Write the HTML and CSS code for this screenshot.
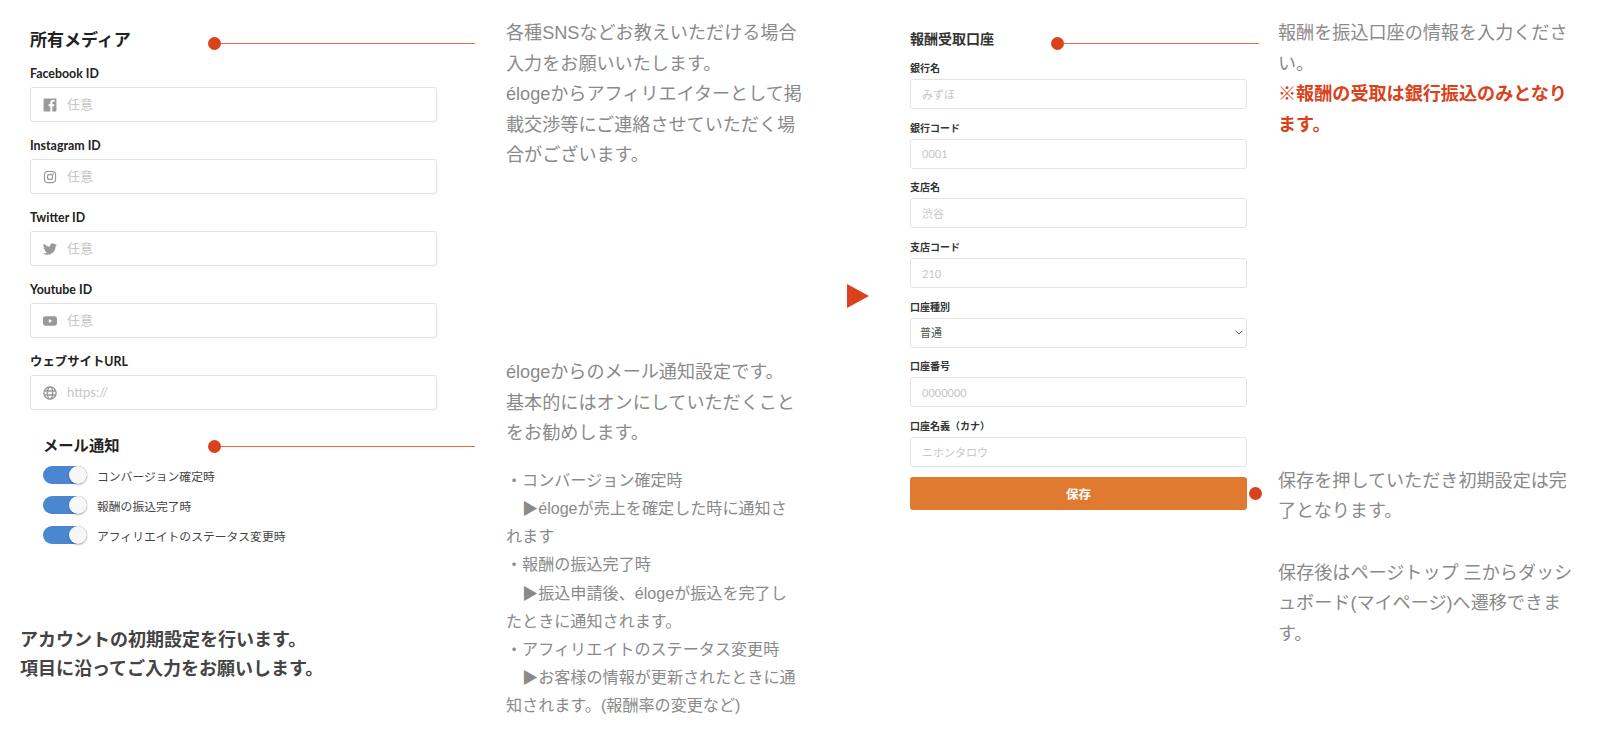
FILE: index.html
```html
<!DOCTYPE html>
<html lang="ja">
<head>
  <meta charset="UTF-8" />
  <title>初期設定</title>
  <link rel="stylesheet" href="styles.css">
</head>
<body>

  <!-- 左: 所有メディア / メール通知 -->
  <section class="col col-media">
    <div class="head">
      <h2>所有メディア</h2>
      <div class="connector"><i class="dot"></i><i class="line"></i></div>
    </div>

    <div class="field">
      <label>Facebook ID</label>
      <div class="icon-input">
        <svg viewBox="0 0 24 24"><path d="M2 1h20a1 1 0 0 1 1 1v20a1 1 0 0 1-1 1h-6v-9h3l.5-3.5H16V8.2c0-1 .4-1.7 1.8-1.7H20V3.3c-.5-.1-1.6-.2-2.900-.2-2.800 0-4.600 1.700-4.600 4.700v2.700h-3V14h3v9H2a1 1 0 0 1-1-1V2a1 1 0 0 1 1-1z"/></svg>
        <input type="text" placeholder="任意">
      </div>
    </div>
    <div class="field">
      <label>Instagram ID</label>
      <div class="icon-input">
        <svg viewBox="0 0 24 24" class="outline"><rect x="2.500" y="2.500" width="19" height="19" rx="5.500"/><circle cx="12" cy="12" r="4.500"/><circle cx="17.500" cy="6.500" r=".5"/></svg>
        <input type="text" placeholder="任意">
      </div>
    </div>
    <div class="field">
      <label>Twitter ID</label>
      <div class="icon-input">
        <svg viewBox="0 0 24 24"><path d="M23.950 4.570a10 10 0 0 1-2.820.77 4.960 4.960 0 0 0 2.160-2.720c-.95.55-2 .96-3.130 1.190a4.920 4.920 0 0 0-8.380 4.480A13.980 13.980 0 0 1 1.640 3.160a4.930 4.930 0 0 0 1.520 6.570 4.900 4.900 0 0 1-2.230-.61v.06a4.920 4.920 0 0 0 3.950 4.830 4.900 4.900 0 0 1-2.220.08 4.930 4.930 0 0 0 4.600 3.420A9.870 9.870 0 0 1 0 19.540a13.940 13.940 0 0 0 7.550 2.210c9.050 0 14-7.500 14-13.980 0-.21 0-.42-.01-.63a10 10 0 0 0 2.410-2.570z"/></svg>
        <input type="text" placeholder="任意">
      </div>
    </div>
    <div class="field">
      <label>Youtube ID</label>
      <div class="icon-input">
        <svg viewBox="0 0 24 24"><path fill-rule="evenodd" d="M4 4h16a4 4 0 0 1 4 4v8a4 4 0 0 1-4 4H4a4 4 0 0 1-4-4V8a4 4 0 0 1 4-4zm6 4.500v7l6-3.500z"/></svg>
        <input type="text" placeholder="任意">
      </div>
    </div>
    <div class="field">
      <label>ウェブサイトURL</label>
      <div class="icon-input">
        <svg viewBox="0 0 24 24" class="outline thick"><circle cx="12" cy="12" r="10.500"/><ellipse cx="12" cy="12" rx="4.500" ry="10.500"/><path d="M2 8.500h20M2 15.500h20"/></svg>
        <input type="text" placeholder="https://">
      </div>
    </div>

    <div class="head head-mail">
      <h2>メール通知</h2>
      <div class="connector"><i class="dot"></i><i class="line"></i></div>
    </div>
    <ul class="toggles">
      <li><span class="toggle"></span>コンバージョン確定時</li>
      <li><span class="toggle"></span>報酬の振込完了時</li>
      <li><span class="toggle"></span>アフィリエイトのステータス変更時</li>
    </ul>

    <p class="lead">アカウントの初期設定を行います。<br>項目に沿ってご入力をお願いします。</p>
  </section>

  <!-- 説明文 -->
  <section class="col col-note">
    <p class="note">各種SNSなどお教えいただける場合<br>入力をお願いいたします。<br>élogeからアフィリエイターとして掲<br>載交渉等にご連絡させていただく場<br>合がございます。</p>
    <p class="note note-mail">élogeからのメール通知設定です。<br>基本的にはオンにしていただくこと<br>をお勧めします。</p>
    <p class="note-list">・コンバージョン確定時<br>　▶élogeが売上を確定した時に通知さ<br>れます<br>・報酬の振込完了時<br>　▶振込申請後、élogeが振込を完了し<br>たときに通知されます。<br>・アフィリエイトのステータス変更時<br>　▶お客様の情報が更新されたときに通<br>知されます。(報酬率の変更など)</p>
  </section>

  <div class="col-arrow"><div class="arrow"></div></div>

  <!-- 報酬受取口座 -->
  <section class="col col-bank">
    <div class="head">
      <h3>報酬受取口座</h3>
      <div class="connector"><i class="dot"></i><i class="line"></i></div>
    </div>
    <div class="bank-field"><label>銀行名</label><input type="text" placeholder="みずほ"></div>
    <div class="bank-field"><label>銀行コード</label><input type="text" placeholder="0001"></div>
    <div class="bank-field"><label>支店名</label><input type="text" placeholder="渋谷"></div>
    <div class="bank-field"><label>支店コード</label><input type="text" placeholder="210"></div>
    <div class="bank-field">
      <label>口座種別</label>
      <div class="select-wrap">
        <select><option>普通</option><option>当座</option></select>
        <svg viewBox="0 0 8 5"><path d="M.7.8 4 4l3.300-3.200"/></svg>
      </div>
    </div>
    <div class="bank-field"><label>口座番号</label><input type="text" placeholder="0000000"></div>
    <div class="bank-field"><label>口座名義（カナ）</label><input type="text" placeholder="ニホンタロウ"></div>
    <div class="submit">
      <button>保存</button>
      <i class="dot"></i>
    </div>
  </section>

  <section class="col col-note-right">
    <p class="note">報酬を振込口座の情報を入力くださ<br>い。<br><strong>※報酬の受取は銀行振込のみとなり<br>ます。</strong></p>
    <p class="note note-save">保存を押していただき初期設定は完<br>了となります。<br><br>保存後はページトップ 三からダッシ<br>ュボード(マイページ)へ遷移できま<br>す。</p>
  </section>

</body>
</html>
```

FILE: styles.css
```css
* {
  box-sizing: border-box;
}
html, body {
  margin: 0;
  padding: 0;
  height: 100%;
  background-color: #fff;
  color: #333;
  font-family: "Liberation Sans", "Noto Sans CJK JP", sans-serif;
  overflow: hidden;
}
body {
  display: flex;
  align-items: flex-start;
}
h2, h3, p, ul {
  margin: 0;
  padding: 0;
}
i {
  display: block;
}

/* columns */
.col-media {
  width: 506px;
  flex: none;
  padding: 28px 0 0 20px;
  font-family: Lato, "Noto Sans CJK JP", sans-serif;
}
.col-note {
  width: 341px;
  flex: none;
  padding-top: 18px;
}
.col-arrow {
  width: 63px;
  flex: none;
  padding-top: 284px;
}
.col-bank {
  width: 368px;
  flex: none;
  padding-top: 29px;
  font-family: Lato, "Noto Sans CJK JP", sans-serif;
}
.col-note-right {
  width: 322px;
  flex: none;
  padding-top: 18px;
}

/* heading with connector */
.head {
  display: flex;
  align-items: flex-start;
}
.col-media .head {
  width: 445px;
  margin: 0 0 13px 10px;
}
.col-media h2 {
  width: 178px;
  font-size: 17px;
  line-height: 24px;
  color: #222;
}
.col-media .head .connector {
  margin-top: 9px;
}
.col-media .head-mail {
  width: 432px;
  margin: 23px 0 9px 23px;
}
.col-media .head-mail h2 {
  width: 165px;
  font-size: 15.3px;
}
.col-media .head-mail .connector {
  margin-top: 7px;
}
.col-bank .head {
  width: 349px;
  margin-bottom: 11px;
}
.col-bank h3 {
  width: 141px;
  font-size: 14px;
  line-height: 20px;
  color: #333;
}
.col-bank .head .connector {
  margin-top: 8px;
}
.connector {
  flex: 1;
  display: flex;
  align-items: center;
}
.dot {
  width: 13px;
  height: 13px;
  flex: none;
  border-radius: 50%;
  background-color: #d9421a;
}
.line {
  flex: 1;
  height: 1px;
  background-color: #e5684a;
}

/* media form */
.field {
  width: 407px;
  margin: 0 0 15px 10px;
}
.field label {
  display: block;
  padding-top: 1px;
  margin-bottom: 5px;
  font-size: 12.4px;
  font-weight: bold;
  line-height: 16px;
  color: #222;
}
.icon-input {
  display: flex;
  align-items: center;
  height: 35px;
  padding-left: 12px;
  border: 1px solid #e2e2e2;
  border-radius: 3px;
  box-shadow: 0 0 1px rgba(0, 0, 0, 0.08);
}
.icon-input svg {
  width: 14px;
  height: 14px;
  flex: none;
  fill: #999;
}
.icon-input svg.outline {
  fill: none;
  stroke: #999;
  stroke-width: 2;
}
.icon-input svg.thick {
  stroke-width: 2.4;
}
.icon-input input {
  flex: 1;
  min-width: 0;
  height: 100%;
  padding: 0 0 2px 10px;
  border: none;
  outline: none;
  background: transparent;
  font-family: Lato, "Noto Sans CJK JP", sans-serif;
  font-size: 13px;
}
input::placeholder {
  color: #c6c6c6;
  opacity: 1;
}

/* mail toggles */
.toggles {
  list-style: none;
  margin-left: 23px;
}
.toggles li {
  display: flex;
  align-items: center;
  height: 18px;
  margin-bottom: 12px;
  font-size: 11.8px;
  color: #444;
}
.toggle {
  position: relative;
  width: 44px;
  height: 18px;
  flex: none;
  margin-right: 10px;
  border-radius: 9px;
  background-color: #4a86d1;
}
.toggle::after {
  content: "";
  position: absolute;
  top: 0;
  right: 0;
  width: 18px;
  height: 18px;
  border-radius: 50%;
  background-color: #f7f7f7;
  box-shadow: 0 1px 2px rgba(0, 0, 0, 0.3);
}
.lead {
  margin-top: 82px;
  font-family: "Liberation Sans", "Noto Sans CJK JP", sans-serif;
  font-size: 18px;
  font-weight: bold;
  line-height: 29px;
  color: #444;
}

/* notes */
.note {
  font-size: 18.1px;
  line-height: 30.6px;
  color: #8a8a8a;
  white-space: nowrap;
}
.note strong {
  color: #d9421a;
}
.note-mail {
  margin-top: 186px;
}
.note-save {
  margin-top: 325.5px;
}
.note-list {
  margin-top: 17px;
  font-size: 16.1px;
  line-height: 28.2px;
  color: #8a8a8a;
  white-space: nowrap;
}

.arrow {
  width: 0;
  height: 0;
  border-left: 22px solid #d9421a;
  border-top: 12px solid transparent;
  border-bottom: 12px solid transparent;
}

/* bank form */
.bank-field {
  width: 337px;
  margin-bottom: 11.7px;
}
.bank-field label {
  display: block;
  margin-bottom: 4px;
  font-size: 10px;
  font-weight: bold;
  line-height: 14px;
  color: #333;
}
.bank-field input,
.bank-field select {
  display: block;
  width: 100%;
  height: 30px;
  padding: 0 11px;
  border: 1px solid #e4e4e4;
  border-radius: 3px;
  outline: none;
  background-color: #fff;
  font-family: Lato, "Noto Sans CJK JP", sans-serif;
  font-size: 11px;
  color: #555;
}
.bank-field select {
  padding: 0 9px;
  appearance: none;
}
.select-wrap {
  position: relative;
}
.select-wrap svg {
  position: absolute;
  top: 12px;
  right: 4px;
  width: 8px;
  height: 5px;
  fill: none;
  stroke: #666;
  stroke-width: 1;
}
.submit {
  display: flex;
  align-items: center;
  width: 349px;
  margin-top: -2px;
}
.submit button {
  width: 337px;
  height: 33px;
  flex: none;
  margin-right: 2px;
  border: none;
  border-radius: 3px;
  background-color: #e07a30;
  color: #fff;
  font-family: inherit;
  font-size: 12.5px;
  font-weight: bold;
}
```
